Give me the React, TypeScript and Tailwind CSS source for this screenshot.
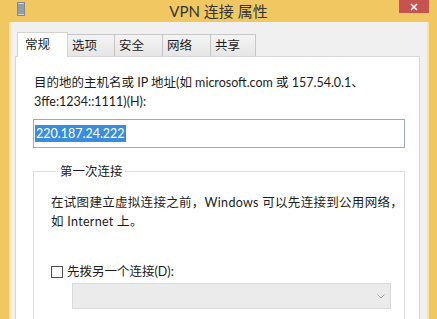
const tabs = [
  { label: '常规', active: true },
  { label: '选项', active: false },
  { label: '安全', active: false },
  { label: '网络', active: false },
  { label: '共享', active: false },
];

const tabWidths = ['w-[51px]', 'w-[47px]', 'w-[48px]', 'w-[48px]', 'w-[45px]'];

function WindowIcon() {
  return (
    <svg width="8" height="14" viewBox="0 0 8 14" className="shrink-0">
      <rect x="0.5" y="0.5" width="7" height="13" fill="#c9d3dc" stroke="#7d8a96" />
      <line x1="1" y1="3" x2="7" y2="3" stroke="#5b6874" />
      <line x1="1" y1="5" x2="7" y2="5" stroke="#5b6874" />
      <line x1="1" y1="7" x2="7" y2="7" stroke="#5b6874" />
      <line x1="1" y1="9" x2="7" y2="9" stroke="#5b6874" />
      <line x1="1" y1="11" x2="7" y2="11" stroke="#5b6874" />
    </svg>
  );
}

export default function App() {
  return (
    <div
      className="w-[437px] h-[319px] overflow-hidden bg-[#f0c761] flex flex-col text-[12.5px] leading-[19px] text-[#1c1c1c]"
      style={{ fontFamily: 'Lato, "Noto Sans CJK SC", sans-serif' }}
    >
      {/* title bar */}
      <div className="relative h-[22px] shrink-0 flex items-center justify-center">
        <div className="absolute left-[17px] top-[2px]">
          <WindowIcon />
        </div>
        <span className="text-[15px] leading-[20px] text-[#353535]">VPN 连接 属性</span>
        <div className="absolute right-[8px] top-0 w-[30px] h-[13px] bg-[#c85250] flex items-center justify-center">
          <svg width="8" height="8" viewBox="0 0 8 8">
            <path d="M1 1L7 7M7 1L1 7" stroke="#ffffff" strokeWidth="1.6" />
          </svg>
        </div>
      </div>

      {/* body */}
      <div className="ml-[9px] w-[420px] flex-1 bg-[#f0f0f0] border-l-2 border-r-2 border-[#f6e3ab] pl-[2px] pr-[7px] pt-[10px] flex flex-col">
        <div className="flex items-end h-[24px] pl-[4px] relative z-10">
          {tabs.map((tab, i) =>
            tab.active ? (
              <div
                key={tab.label}
                className={`${tabWidths[i]} h-[25px] -mb-px bg-white border border-b-0 border-[#d4d4d4] pl-[7px] pt-[2px]`}
              >
                {tab.label}
              </div>
            ) : (
              <div
                key={tab.label}
                className={`${tabWidths[i]} h-[22px] bg-gradient-to-b from-[#f4f4f4] to-[#e6e6e6] border border-l-0 border-b-0 border-[#c6c6c6] pl-[4px] pt-[1px]`}
              >
                {tab.label}
              </div>
            )
          )}
        </div>

        <div className="flex-1 ml-[2px] bg-white border border-[#d7d7d7] pl-[18px] pr-[14px] pt-[16px]">
          <p className="whitespace-nowrap">
            目的地的主机名或 IP 地址(如 microsoft.com 或 157.54.0.1、
            <br />
            3ffe:1234::1111)(H):
          </p>

          <div className="mt-[8px] -ml-[1px] h-[29px] border border-[#98abc4] bg-white flex items-center px-[1px]">
            <span className="bg-[#3a8ddb] text-white leading-[17px] px-[1px]">220.187.24.222</span>
          </div>

          <fieldset className="mt-[14px] -ml-[1px] w-[372px] border border-[#dcdcdc] pl-[17px] pb-[20px]">
            <legend className="ml-[7px] px-[2px]">第一次连接</legend>
            <p className="mt-[12px] whitespace-nowrap tracking-[0.3px]">
              在试图建立虚拟连接之前，Windows 可以先连接到公用网络，
              <br />
              如 Internet 上。
            </p>

            <div className="mt-[31px] flex items-center gap-[4px]">
              <div className="w-[12px] h-[12px] border border-[#4d4d4d] bg-white" />
              <span>先拨另一个连接(D):</span>
            </div>

            <div className="mt-[2px] ml-[21px] w-[319px] h-[26px] bg-[#ebebeb] border border-[#d9d9d9] flex items-center justify-end pr-[5px]">
              <svg width="8" height="5" viewBox="0 0 8 5">
                <path d="M0.5 0.5L4 4L7.5 0.5" stroke="#a6a6a6" fill="none" />
              </svg>
            </div>
          </fieldset>
        </div>
      </div>
    </div>
  );
}
